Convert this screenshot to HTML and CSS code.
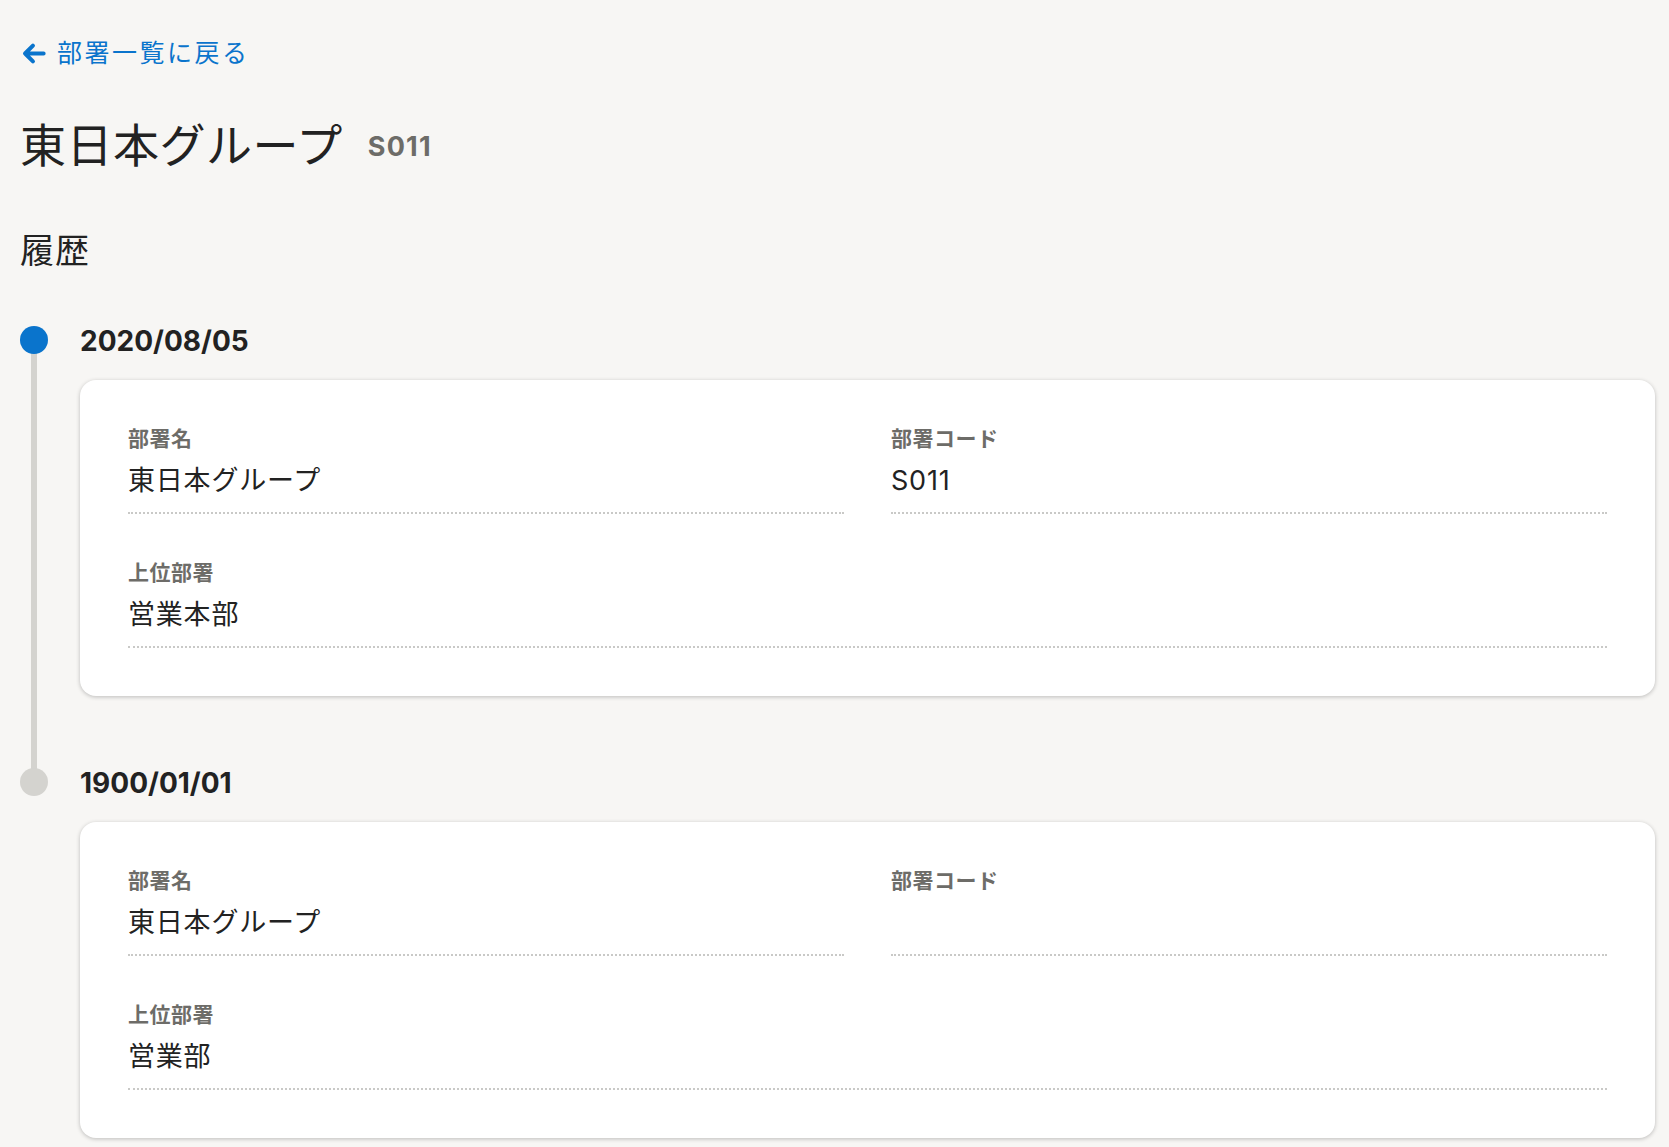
FILE: index.html
```html
<!DOCTYPE html>
<html lang="ja">
<head>
    <meta charset="UTF-8">
    <meta name="viewport" content="width=device-width, initial-scale=1.0">
    <title>東日本グループ | 部署</title>
    <link rel="stylesheet" href="styles.css">
</head>
<body>
    <div class="page">
        <a href="#" class="back-link">
            <svg class="back-icon" viewBox="0 0 24 24" width="27" height="27" aria-hidden="true">
                <path d="M21 12H4.5M11.5 5L4.5 12L11.5 19" fill="none" stroke="currentColor" stroke-width="3.6" stroke-linecap="round" stroke-linejoin="round"/>
            </svg>
            <span>部署一覧に戻る</span>
        </a>

        <h1 class="title">東日本グループ<span class="title-code">S011</span></h1>

        <h2 class="section-title">履歴</h2>

        <ol class="timeline">
            <li class="timeline-item is-current">
                <div class="timeline-dot"></div>
                <div class="timeline-body">
                    <h3 class="timeline-date">2020/08/05</h3>
                    <div class="card">
                        <dl class="fields">
                            <div class="field">
                                <dt>部署名</dt>
                                <dd>東日本グループ</dd>
                            </div>
                            <div class="field">
                                <dt>部署コード</dt>
                                <dd>S011</dd>
                            </div>
                            <div class="field field-wide">
                                <dt>上位部署</dt>
                                <dd>営業本部</dd>
                            </div>
                        </dl>
                    </div>
                </div>
            </li>
            <li class="timeline-item">
                <div class="timeline-dot"></div>
                <div class="timeline-body">
                    <h3 class="timeline-date">1900/01/01</h3>
                    <div class="card">
                        <dl class="fields">
                            <div class="field">
                                <dt>部署名</dt>
                                <dd>東日本グループ</dd>
                            </div>
                            <div class="field">
                                <dt>部署コード</dt>
                                <dd></dd>
                            </div>
                            <div class="field field-wide">
                                <dt>上位部署</dt>
                                <dd>営業部</dd>
                            </div>
                        </dl>
                    </div>
                </div>
            </li>
        </ol>
    </div>
</body>
</html>
```

FILE: styles.css
```css
body {
    margin: 0;
    background: #f7f6f4;
    color: #222;
    font-family: Inter, "Noto Sans CJK JP", sans-serif;
}

.page {
    padding: 35px 14px 40px 20px;
}

/* 戻るリンク */
.back-link {
    display: inline-flex;
    align-items: center;
    gap: 10px;
    color: #0a74cc;
    text-decoration: none;
    font-size: 25px;
    line-height: 36px;
    letter-spacing: 2.5px;
}
.back-icon {
    display: block;
}

.title {
    margin: 44px 0 0;
    height: 60px;
    font-size: 46px;
    font-weight: 400;
    line-height: 60px;
    letter-spacing: 0.5px;
}
.title-code {
    margin-left: 25px;
    color: #6d6c68;
    font-size: 27px;
    font-weight: 700;
    letter-spacing: 1.2px;
    vertical-align: 6px;
}

.section-title {
    margin: 52px 0 0;
    font-size: 34px;
    font-weight: 400;
    line-height: 48px;
    letter-spacing: 1px;
}

/* 履歴タイムライン */
.timeline {
    list-style: none;
    margin: 45px 0 0;
    padding: 0;
}
.timeline-item {
    position: relative;
    display: grid;
    grid-template-columns: 60px 1fr;
    padding-bottom: 66px;
}
.timeline-item:last-child {
    padding-bottom: 0;
}
.timeline-item:not(:last-child)::before {
    content: "";
    position: absolute;
    left: 11px;
    top: 20px;
    bottom: -20px;
    width: 6px;
    background: #d4d3cf;
}
.timeline-dot {
    position: relative;
    width: 28px;
    height: 28px;
    margin-top: 6px;
    border-radius: 50%;
    background: #d4d3cf;
}
.is-current .timeline-dot {
    background: #0a74cc;
}

.timeline-date {
    margin: 0 0 20px;
    padding-top: 2px;
    height: 38px;
    font-size: 28px;
    font-weight: 700;
    line-height: 38px;
}

.card {
    background: #fff;
    border-radius: 16px;
    box-shadow: 0 1px 4px rgba(0, 0, 0, 0.24);
    padding: 44px 48px 48px;
}

.fields {
    display: grid;
    grid-template-columns: 1fr 1fr;
    column-gap: 47px;
    row-gap: 44px;
    margin: 0;
}
.field-wide {
    grid-column: 1 / -1;
}
.field dt {
    color: #6d6c68;
    font-size: 21px;
    font-weight: 700;
    line-height: 30px;
    letter-spacing: 0.5px;
}
.field dd {
    margin: 8px 0 0;
    height: 38px;
    padding-bottom: 12px;
    border-bottom: 2px dotted #c9c9c7;
    font-size: 27px;
    line-height: 38px;
    letter-spacing: 0.8px;
}
```
